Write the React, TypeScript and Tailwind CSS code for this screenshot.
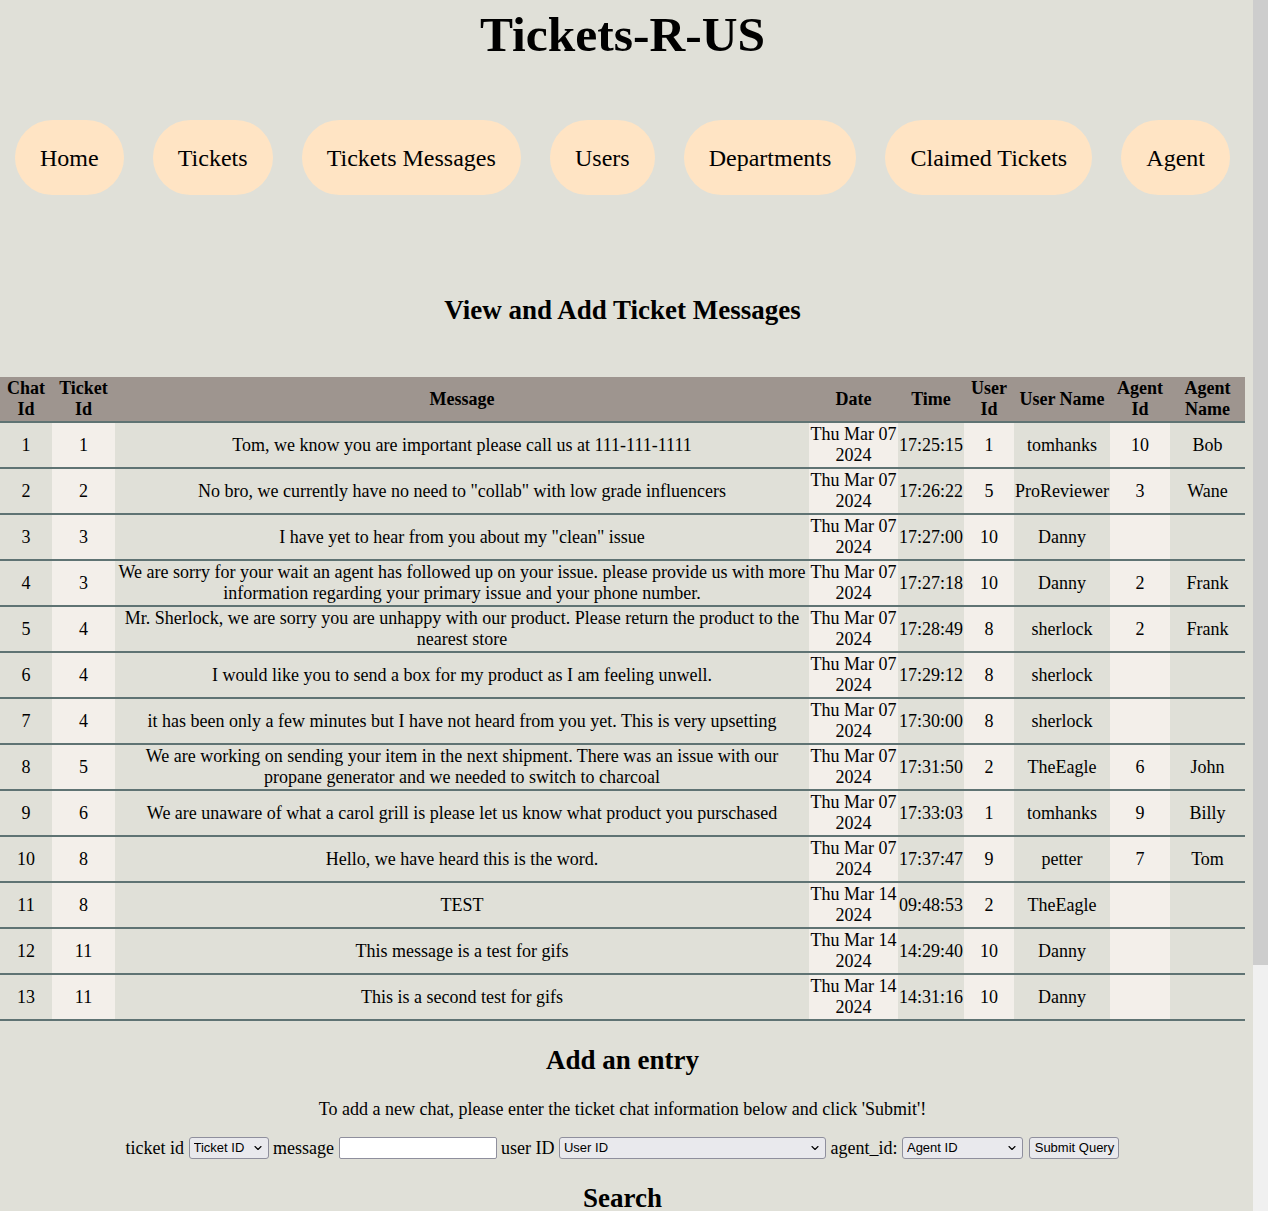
import { ChevronDown } from 'lucide-react'

type Row = {
  chatId: number
  ticketId: number
  message: string
  date: string
  time: string
  userId: number
  userName: string
  agentId?: number
  agentName?: string
}

const rows: Row[] = [
  { chatId: 1, ticketId: 1, message: 'Tom, we know you are important please call us at 111-111-1111', date: 'Thu Mar 07 2024', time: '17:25:15', userId: 1, userName: 'tomhanks', agentId: 10, agentName: 'Bob' },
  { chatId: 2, ticketId: 2, message: 'No bro, we currently have no need to "collab" with low grade influencers', date: 'Thu Mar 07 2024', time: '17:26:22', userId: 5, userName: 'ProReviewer', agentId: 3, agentName: 'Wane' },
  { chatId: 3, ticketId: 3, message: 'I have yet to hear from you about my "clean" issue', date: 'Thu Mar 07 2024', time: '17:27:00', userId: 10, userName: 'Danny' },
  { chatId: 4, ticketId: 3, message: 'We are sorry for your wait an agent has followed up on your issue. please provide us with more information regarding your primary issue and your phone number.', date: 'Thu Mar 07 2024', time: '17:27:18', userId: 10, userName: 'Danny', agentId: 2, agentName: 'Frank' },
  { chatId: 5, ticketId: 4, message: 'Mr. Sherlock, we are sorry you are unhappy with our product. Please return the product to the nearest store', date: 'Thu Mar 07 2024', time: '17:28:49', userId: 8, userName: 'sherlock', agentId: 2, agentName: 'Frank' },
  { chatId: 6, ticketId: 4, message: 'I would like you to send a box for my product as I am feeling unwell.', date: 'Thu Mar 07 2024', time: '17:29:12', userId: 8, userName: 'sherlock' },
  { chatId: 7, ticketId: 4, message: 'it has been only a few minutes but I have not heard from you yet. This is very upsetting', date: 'Thu Mar 07 2024', time: '17:30:00', userId: 8, userName: 'sherlock' },
  { chatId: 8, ticketId: 5, message: 'We are working on sending your item in the next shipment. There was an issue with our propane generator and we needed to switch to charcoal', date: 'Thu Mar 07 2024', time: '17:31:50', userId: 2, userName: 'TheEagle', agentId: 6, agentName: 'John' },
  { chatId: 9, ticketId: 6, message: 'We are unaware of what a carol grill is please let us know what product you purschased', date: 'Thu Mar 07 2024', time: '17:33:03', userId: 1, userName: 'tomhanks', agentId: 9, agentName: 'Billy' },
  { chatId: 10, ticketId: 8, message: 'Hello, we have heard this is the word.', date: 'Thu Mar 07 2024', time: '17:37:47', userId: 9, userName: 'petter', agentId: 7, agentName: 'Tom' },
  { chatId: 11, ticketId: 8, message: 'TEST', date: 'Thu Mar 14 2024', time: '09:48:53', userId: 2, userName: 'TheEagle' },
  { chatId: 12, ticketId: 11, message: 'This message is a test for gifs', date: 'Thu Mar 14 2024', time: '14:29:40', userId: 10, userName: 'Danny' },
  { chatId: 13, ticketId: 11, message: 'This is a second test for gifs', date: 'Thu Mar 14 2024', time: '14:31:16', userId: 10, userName: 'Danny' },
]

const navItems = ['Home', 'Tickets', 'Tickets Messages', 'Users', 'Departments', 'Claimed Tickets', 'Agent']

// column widths taken from the screenshot, sum = 1245
const columns = [
  { label: 'Chat Id', width: 'w-[52px]' },
  { label: 'Ticket Id', width: 'w-[63px]' },
  { label: 'Message', width: 'w-[694px]' },
  { label: 'Date', width: 'w-[89px]' },
  { label: 'Time', width: 'w-[66px]' },
  { label: 'User Id', width: 'w-[50px]' },
  { label: 'User Name', width: 'w-[96px]' },
  { label: 'Agent Id', width: 'w-[60px]' },
  { label: 'Agent Name', width: 'w-[75px]' },
]

const cell = 'border-b-2 border-[#5f7373] px-[1px] py-[1px] text-center align-middle'
const light = 'bg-[#f3efea]'

function FakeSelect({ label, width }: { label: string; width: string }) {
  return (
    <span className={`relative inline-flex ${width}`}>
      <select className="h-[22px] w-full appearance-none rounded-[3px] border border-[#8f8f9d] bg-[#e9e9ed] pl-[4px] pr-[18px] font-['Liberation_Sans',Arial,sans-serif] text-[13px] leading-[20px] text-black">
        <option>{label}</option>
      </select>
      <ChevronDown className="pointer-events-none absolute right-[5px] top-[5px] h-[12px] w-[12px] text-black" strokeWidth={2.25} />
    </span>
  )
}

export default function App() {
  return (
    <div className="flex h-[1211px] overflow-hidden bg-[#e0e0d8] font-['Liberation_Serif','Times_New_Roman',serif] text-black">
      <div className="w-[1245px] shrink-0">
        <h1 className="pt-[6px] pb-[1px] text-center text-[49.5px] font-bold leading-[57px]">Tickets-R-US</h1>

        <nav className="mt-[56px] flex justify-between px-[15px]">
          {navItems.map((item) => (
            <a
              key={item}
              href="#"
              className="rounded-full bg-[#ffe4c4] px-[25px] pt-[25px] pb-[23px] text-[24px] leading-[27px] text-black"
            >
              {item}
            </a>
          ))}
        </nav>

        <h2 className="mt-[100px] text-center text-[27px] font-bold leading-[31px]">View and Add Ticket Messages</h2>

        <table className="mt-[51px] w-[1245px] table-fixed border-separate border-spacing-0 text-[18px] leading-[21px]">
          <thead>
            <tr>
              {columns.map((c) => (
                <th key={c.label} className={`${c.width} ${cell} bg-[#9e958f] font-bold`}>
                  {c.label}
                </th>
              ))}
            </tr>
          </thead>
          <tbody>
            {rows.map((r) => (
              <tr key={r.chatId}>
                <td className={cell}>{r.chatId}</td>
                <td className={`${cell} ${light}`}>{r.ticketId}</td>
                <td className={cell}>{r.message}</td>
                <td className={`${cell} ${light}`}>{r.date}</td>
                <td className={`${cell} whitespace-nowrap`}>{r.time}</td>
                <td className={`${cell} ${light}`}>{r.userId}</td>
                <td className={cell}>{r.userName}</td>
                <td className={`${cell} ${light}`}>{r.agentId ?? ''}</td>
                <td className={cell}>{r.agentName ?? ''}</td>
              </tr>
            ))}
          </tbody>
        </table>

        <h2 className="mt-[24px] text-center text-[27px] font-bold leading-[31px]">Add an entry</h2>
        <p className="mt-[23px] text-center text-[18px] leading-[21px]">
          To add a new chat, please enter the ticket chat information below and click 'Submit'!
        </p>

        <form className="mt-[17px] flex h-[22px] items-center justify-center gap-[4.5px] text-[18px] leading-[21px]">
          <label>ticket id</label>
          <FakeSelect label="Ticket ID" width="w-[80px]" />
          <label>message</label>
          <input
            type="text"
            className="h-[22px] w-[158px] rounded-[2px] border border-[#8f8f9d] bg-white px-[2px] text-[13px]"
          />
          <label>user ID</label>
          <FakeSelect label="User ID" width="w-[267px]" />
          <label>agent_id:</label>
          <FakeSelect label="Agent ID" width="w-[121px]" />
          <button
            type="button"
            className="ml-[2px] h-[22px] w-[90px] rounded-[3px] border border-[#8f8f9d] bg-[#e9e9ed] font-['Liberation_Sans',Arial,sans-serif] text-[13px] leading-[20px]"
          >
            Submit Query
          </button>
        </form>

        <h2 className="mt-[24px] text-center text-[27px] font-bold leading-[31px]">Search</h2>
      </div>

      <div className="w-[8px] shrink-0" />

      {/* scrollbar */}
      <div className="flex w-[15px] shrink-0 flex-col bg-[#f0f0f0]">
        <div className="h-[965px] bg-[#cdcdcd]" />
      </div>
    </div>
  )
}
